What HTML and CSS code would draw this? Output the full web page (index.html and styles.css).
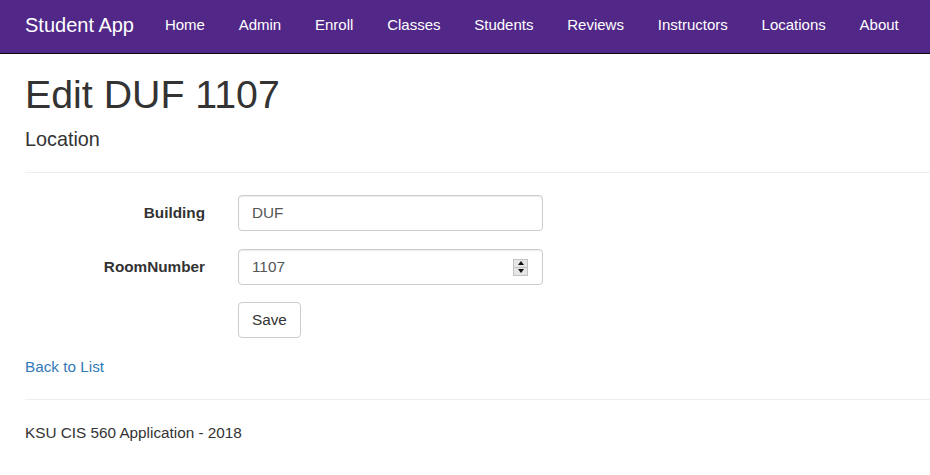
FILE: index.html
```html
<!DOCTYPE html>
<html lang="en">
<head>
<meta charset="utf-8">
<title>Edit DUF 1107 - Student App</title>
<link rel="stylesheet" href="styles.css">
</head>
<body>
<nav class="navbar">
  <a class="brand" href="#">Student App</a>
  <ul class="nav">
    <li><a href="#">Home</a></li>
    <li><a href="#">Admin</a></li>
    <li><a href="#">Enroll</a></li>
    <li><a href="#">Classes</a></li>
    <li><a href="#">Students</a></li>
    <li><a href="#">Reviews</a></li>
    <li><a href="#">Instructors</a></li>
    <li><a href="#">Locations</a></li>
    <li><a href="#">About</a></li>
  </ul>
</nav>
<main class="body-content">
  <h1 class="title">Edit DUF 1107</h1>
  <h4 class="subtitle">Location</h4>
  <hr class="rule rule-top">
  <form class="form">
    <div class="form-group">
      <label class="control-label" for="Building">Building</label>
      <div class="field">
        <input class="form-control" id="Building" type="text" value="DUF">
      </div>
    </div>
    <div class="form-group">
      <label class="control-label" for="RoomNumber">RoomNumber</label>
      <div class="field">
        <input class="form-control" id="RoomNumber" type="number" value="1107">
        <span class="spinner" aria-hidden="true">
          <span class="spin spin-up"><span class="tri tri-up"></span></span>
          <span class="spin spin-down"><span class="tri tri-down"></span></span>
        </span>
      </div>
    </div>
    <div class="form-group">
      <span class="control-label"></span>
      <div class="field">
        <button class="btn" type="button">Save</button>
      </div>
    </div>
  </form>
  <p class="back"><a href="#">Back to List</a></p>
  <hr class="rule rule-bottom">
  <footer class="footer">
    <p>KSU CIS 560 Application - 2018</p>
  </footer>
</main>
</body>
</html>
```

FILE: styles.css
```css
* { box-sizing: border-box; }

html, body {
  margin: 0;
  padding: 0;
}

body {
  font-family: "Liberation Sans", Arial, sans-serif;
  font-size: 15.3px;
  line-height: 21.4px;
  color: #333;
  background: #fff;
  overflow: hidden;
}

a { color: #337ab7; text-decoration: none; }

.navbar {
  display: flex;
  align-items: center;
  height: 54px;
  background: #512888;
  border-bottom: 1px solid #0a0a0a;
}

.brand {
  color: #fff;
  font-size: 20px;
  line-height: 24px;
  padding: 0 14px 0 25px;
  margin-top: -3px;
}

.nav {
  display: flex;
  list-style: none;
  margin: 0;
  padding: 0;
}

.nav a {
  display: block;
  color: #fff;
  font-size: 15px;
  line-height: 21px;
  padding: 0 16.9px;
  margin-top: -4px;
  white-space: nowrap;
}

.body-content {
  padding-left: 25px;
}

.title {
  font-size: 39.3px;
  font-weight: 500;
  line-height: 42.4px;
  margin: 19.4px 0 0;
}

.subtitle {
  font-size: 19.8px;
  font-weight: 500;
  line-height: 21.5px;
  margin: 12.75px 0 0;
}

.rule {
  border: 0;
  border-top: 1px solid #eee;
  margin: 0;
  height: 0;
}

.rule-top { margin-top: 22px; }
.rule-bottom { margin-top: 22.5px; }

.form {
  margin-top: 22px;
}

.form-group {
  display: grid;
  grid-template-columns: 180px 305px;
  column-gap: 33px;
  height: 36px;
  margin-bottom: 17.5px;
}

.form-group:last-child { margin-bottom: 0; }

.control-label {
  text-align: right;
  font-weight: 700;
  line-height: 36px;
}

.field {
  position: relative;
}

.form-control {
  display: block;
  width: 100%;
  height: 36px;
  padding: 0 13px;
  font-family: "Liberation Sans", Arial, sans-serif;
  font-size: 15.3px;
  color: #555;
  background: #fff;
  border: 1px solid #ccc;
  border-radius: 4px;
  box-shadow: inset 0 1px 1px rgba(0, 0, 0, .075);
  outline: none;
  -moz-appearance: textfield;
}

.form-control::-webkit-inner-spin-button,
.form-control::-webkit-outer-spin-button {
  -webkit-appearance: none;
  margin: 0;
}

.spinner {
  position: absolute;
  right: 15px;
  top: 10px;
  width: 15px;
  height: 17px;
  display: flex;
  flex-direction: column;
  border: 1px solid #c3c3c3;
  background: #e6e6e6;
}

.spin {
  flex: 1;
  display: flex;
  align-items: center;
  justify-content: center;
}

.spin-up { border-bottom: 1px solid #c3c3c3; }

.tri {
  width: 0;
  height: 0;
  border-left: 3.5px solid transparent;
  border-right: 3.5px solid transparent;
}

.tri-up { border-bottom: 4px solid #111; }
.tri-down { border-top: 4px solid #111; }

.btn {
  display: block;
  height: 36px;
  padding: 0 13px;
  font-family: "Liberation Sans", Arial, sans-serif;
  font-size: 15.3px;
  color: #333;
  background: #fff;
  border: 1px solid #ccc;
  border-radius: 4px;
  cursor: pointer;
}

.back {
  margin: 17.5px 0 0;
}

.footer p {
  margin: 22px 0 0;
}
```
